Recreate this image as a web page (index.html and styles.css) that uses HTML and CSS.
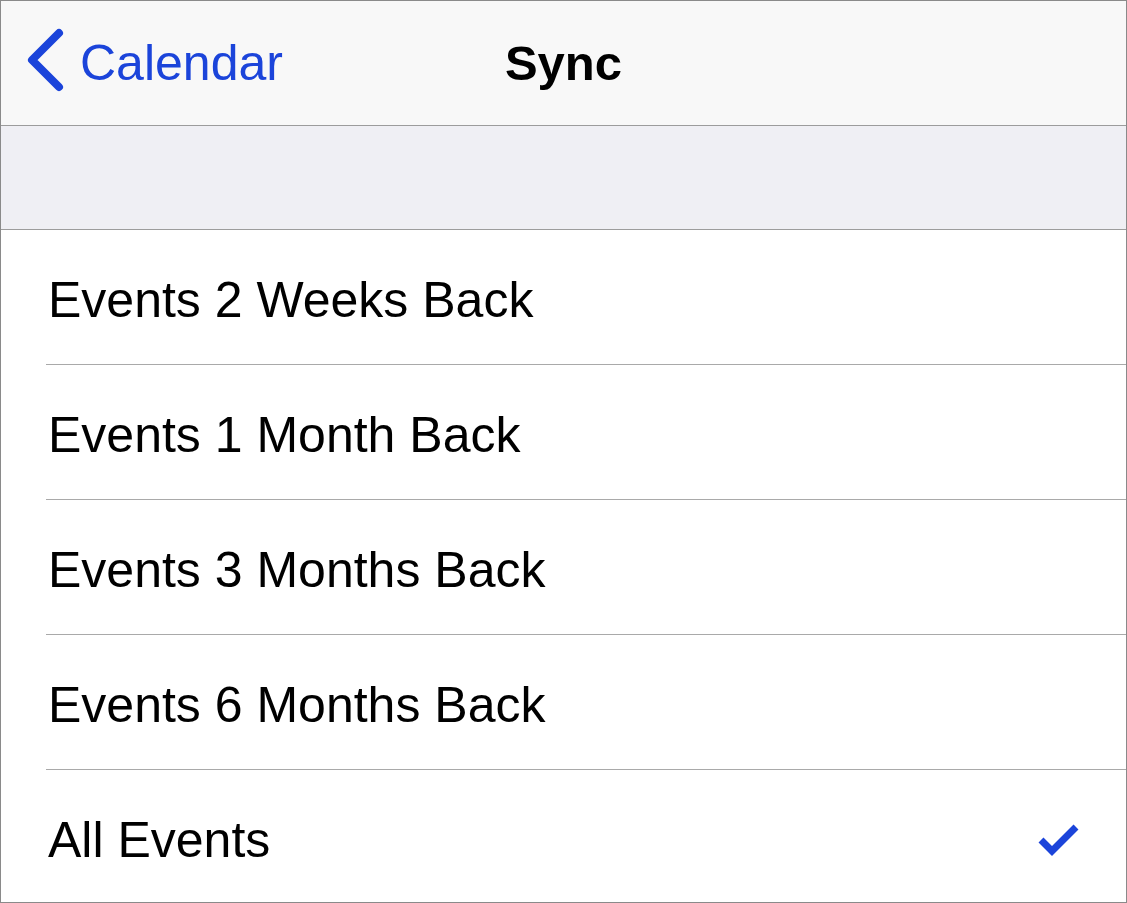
FILE: index.html
```html
<!DOCTYPE html>
<html lang="en">
<head>
    <meta charset="UTF-8">
    <meta name="viewport" content="width=device-width, initial-scale=1.0">
    <title>Sync</title>
    <link rel="stylesheet" href="styles.css">
</head>
<body>
    <div class="screen">
        <!-- Навигация -->
        <header class="nav-bar">
            <a class="back-btn" href="#">
                <svg class="back-icon" width="42" height="70" viewBox="0 0 42 70">
                    <path d="M35 5 L8 32 L35 59" fill="none" stroke="currentColor" stroke-width="8" stroke-linecap="round" stroke-linejoin="round"/>
                </svg>
                <span>Calendar</span>
            </a>
            <h1 class="nav-title">Sync</h1>
            <div></div>
        </header>

        <div class="group-gap"></div>

        <!-- Список вариантов -->
        <ul class="options">
            <li class="option">Events 2 Weeks Back</li>
            <li class="option">Events 1 Month Back</li>
            <li class="option">Events 3 Months Back</li>
            <li class="option">Events 6 Months Back</li>
            <li class="option selected">
                <span>All Events</span>
                <svg class="check" width="48" height="42" viewBox="0 0 48 42">
                    <path d="M6 21 L17 32 L41 8" fill="none" stroke="currentColor" stroke-width="7"/>
                </svg>
            </li>
        </ul>
    </div>
</body>
</html>
```

FILE: styles.css
```css
* {
    margin: 0;
    padding: 0;
    box-sizing: border-box;
    font-family: "Liberation Sans", Arial, sans-serif;
}

body {
    background: #fff;
    color: #000;
}

.screen {
    width: 1127px;
    height: 903px;
    border: 1px solid #8a8a8a;
    overflow: hidden;
    background: #fff;
}

/* Навигация */
.nav-bar {
    height: 125px;
    background: #f8f8f8;
    border-bottom: 1px solid #9c9c9c;
    display: grid;
    grid-template-columns: 1fr auto 1fr;
    align-items: center;
}

.back-btn {
    display: flex;
    align-items: center;
    color: #1b44da;
    text-decoration: none;
    font-size: 50px;
    padding-left: 23px;
}

.back-icon {
    margin-right: 14px;
}

.nav-title {
    font-size: 49px;
    font-weight: bold;
}

.group-gap {
    height: 104px;
    background: #efeff4;
    border-bottom: 1px solid #9c9c9c;
}

/* Список */
.options {
    list-style: none;
}

.option {
    height: 135px;
    display: flex;
    align-items: center;
    justify-content: space-between;
    padding: 5px 43px 0 47px;
    font-size: 50px;
    position: relative;
}

.option::after {
    content: "";
    position: absolute;
    left: 45px;
    right: 0;
    bottom: 0;
    height: 1px;
    background: #a9a9a9;
}

.option:last-child::after {
    display: none;
}

.check {
    color: #1b44da;
}
```
